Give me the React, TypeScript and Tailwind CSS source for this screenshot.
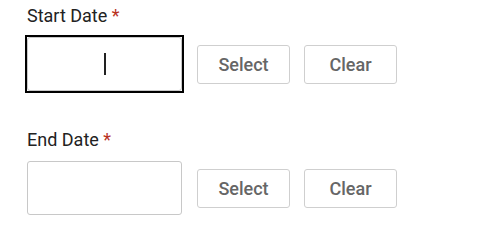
import React from 'react';

function DateField({ label, focused }: { label: string; focused?: boolean }) {
  return (
    <div>
      <div className="text-[18px] leading-[24px] text-[#222]">
        {label} <span className="text-[#b8321f]">*</span>
      </div>
      <div className="mt-[9px] flex items-center">
        <div className={focused ? '-m-[2px] border-2 border-black' : ''}>
          <div className="flex h-[54px] w-[155px] items-center justify-center rounded-[3px] border border-[#c8c8c8] bg-white">
            {focused && <span className="ml-[1px] h-[22px] w-[2px] bg-[#222]" />}
          </div>
        </div>
        <button className="ml-[15px] h-[39px] w-[93px] rounded-[3px] border border-[#cfcfcf] bg-white pt-[1px] text-[18px] font-medium text-[#666]">
          Select
        </button>
        <button className="ml-[14px] h-[39px] w-[93px] rounded-[3px] border border-[#cfcfcf] bg-white pt-[1px] text-[18px] font-medium text-[#666]">
          Clear
        </button>
      </div>
    </div>
  );
}

export default function App() {
  return (
    <div className="h-[237px] w-[478px] bg-white pl-[27px] pt-[4px] font-['Roboto',sans-serif]">
      <DateField label="Start Date" focused />
      <div className="mt-[37px]">
        <DateField label="End Date" />
      </div>
    </div>
  );
}
